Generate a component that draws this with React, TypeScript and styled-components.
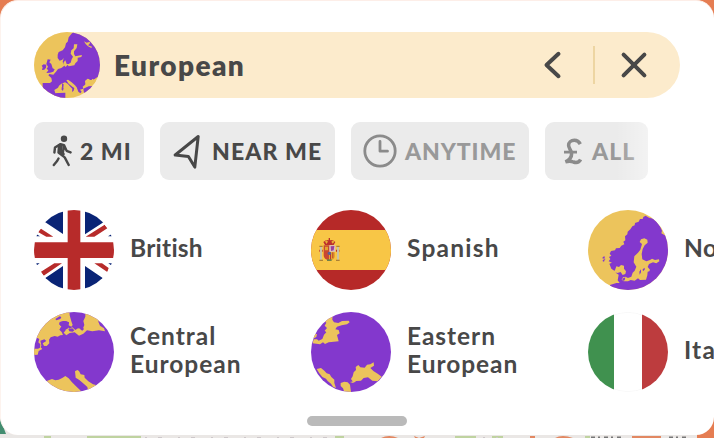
import React from "react";
import styled, { createGlobalStyle } from "styled-components";

const GlobalStyle = createGlobalStyle`
  * { box-sizing: border-box; }
  html, body { margin: 0; }
  body {
    width: 714px;
    height: 438px;
    overflow: hidden;
    font-family: Lato, "Liberation Sans", sans-serif;
    color: #484848;
  }
`;

const Page = styled.main`
  position: relative;
  width: 714px;
  height: 438px;
  overflow: hidden;
  background: #e57d52;
`;

const MapBackdrop = styled.svg`
  position: absolute;
  left: 0;
  bottom: 0;
`;

const Panel = styled.section`
  position: relative;
  display: flex;
  flex-direction: column;
  width: 714px;
  height: 435px;
  border-top: 1px solid #fdeee8;
  border-left: 1px solid #fdf3ee;
  border-radius: 18px;
  background: #fff;
  padding: 31px 0 9px 33px;
  overflow: hidden;
`;

const SearchBar = styled.header`
  display: flex;
  align-items: center;
  flex: none;
  width: 646px;
  height: 66px;
  border-radius: 33px;
  background: #fcebcc;
`;

const Title = styled.h1`
  margin: 0 auto 0 14px;
  font-size: 28px;
  line-height: 34px;
  font-weight: 800;
  letter-spacing: 1.4px;
`;

const IconButton = styled.button`
  display: grid;
  place-items: center;
  width: 86px;
  height: 66px;
  padding: 0 0 0 3px;
  border: 0;
  background: none;
  color: inherit;
`;

const CloseButton = styled(IconButton)`
  width: 77px;
  padding: 0;
  margin-right: 8px;
`;

const Divider = styled.span`
  width: 2px;
  height: 38px;
  background: #edd5a2;
`;

const Chips = styled.div`
  display: flex;
  flex: none;
  gap: 16px;
  position: relative;
  width: 614px;
  height: 58px;
  margin-top: 24px;

  &::after {
    content: "";
    position: absolute;
    right: 0;
    width: 32px;
    height: 58px;
    background: linear-gradient(90deg, #fff0, #fff6);
  }
`;

const Chip = styled.button<{ $width: number; $pad: number; $gap: number; $muted?: boolean; $spacing: number }>`
  display: flex;
  align-items: center;
  flex: none;
  gap: ${(p) => p.$gap}px;
  width: ${(p) => p.$width}px;
  height: 58px;
  padding: 0 0 0 ${(p) => p.$pad}px;
  border: 0;
  border-radius: 9px;
  background: #ebebeb;
  color: ${(p) => (p.$muted ? "#999" : "#484848")};
  font: 900 23px Lato, "Liberation Sans", sans-serif;
  letter-spacing: ${(p) => p.$spacing}px;
  white-space: nowrap;

  svg { flex: none; color: ${(p) => (p.$muted ? "#8b8b8b" : "#484848")}; }
`;

const CuisineGrid = styled.div`
  display: grid;
  flex: none;
  grid-template-columns: repeat(3, 277px);
  grid-auto-rows: 80px;
  row-gap: 22px;
  margin-top: 30px;
`;

const Cuisine = styled.div`
  display: flex;
  align-items: center;
  gap: 16px;
`;

const CuisineName = styled.span<{ $spacing: number }>`
  width: 140px;
  margin-top: -5px;
  font-size: 24.5px;
  line-height: 28px;
  font-weight: 700;
  letter-spacing: ${(p) => p.$spacing}px;
`;

const Handle = styled.div`
  align-self: center;
  width: 100px;
  height: 10px;
  margin-top: auto;
  margin-right: 35px;
  border-radius: 5px;
  background: #bababa;
`;

const Badge = styled.svg`
  display: block;
  flex: none;
  border-radius: 50%;
`;

const gold = "#ecc45c";
const violet = "#8338cd";

const EuropeGlobe = () => (
  <Badge width="66" height="66" viewBox="102 96 198 198">
    <rect x="102" y="96" width="198" height="198" fill={gold} />
    <path fill={violet} d="M220 96L214 102 206 112 203 125 198 130 195 142 188 151 176 156 173 164 173 174 179 182 187 179 191 174 188 186 193 197 184 204 174 207 168 215 160 224 148 222 145 226 154 234 156 244 150 249 128 249 128 264 142 278 158 286 166 280 163 270 174 263 177 257 184 251 195 247 203 251 211 260 217 266 216 276 221 272 223 264 218 261 206 251 199 241 204 239 214 246 225 256 230 262 235 275 241 280 245 275 240 269 250 266 248 260 258 252 255 244 263 236 272 240 276 236 281 239 289 233 300 228V96z" />
    <path fill={violet} d="M143 178L152 179 148 187 154 192 158 205 164 208 160 215 150 218 139 219 145 211 140 206 144 200 139 192zM131 193L139 194 138 203 133 209 126 210 128 202 125 197zM158 280L196 278V296H166zM186 250L191 253 190 264 186 262zM185 262L191 264 189 272 185 270zM250 266L266 259 280 258 290 249 290 262 265 280 252 278z" />
    <path fill={gold} d="M222 133L232 133 230 144 222 154 222 162 226 169 246 165 244 171 233 173 233 183 226 190 223 196 206 199 203 194 197 201 190 194 191 187 196 181 200 192 206 192 212 188 215 178 219 170 212 161 214 151 221 145zM252 124L260 128 270 125 269 131 264 136 276 140 274 144 264 139 257 132zM256 242L264 236 271 240 275 236 281 239 289 237 287 249 272 250 256 255zM214 276L201 271 199 274z" />
    <path fill={violet} d="M268 235L278 234 275 240 269 239zM201 187L207 185 207 190z" />
  </Badge>
);

const CentralGlobe = () => (
  <Badge width="80" height="80" viewBox="30 36 240 240">
    <rect x="30" y="36" width="240" height="240" fill={violet} />
    <path fill={gold} d="M30 30H136L137 46 142 64 146 75 142 80 134 76 135 67 128 64 118 63 107 66 105 73 112 79 106 89 113 96 117 105 109 106 101 110 92 108 80 112 75 119 76 130 68 138 52 137 50 142 55 147 44 153 41 164 28 165V146H42L48 143 49 133 43 127 46 117 36 112V30zM184 30H236V68L222 63 228 77 240 85 243 94 225 91 205 94 189 91 178 101 165 107 152 97 137 99 127 106 119 98 125 91 121 84 130 79 136 86 145 82 154 90 162 85 176 88 181 75 178 63 184 50zM68 243L84 237 94 241 104 239 116 233 124 228 134 235 144 247 156 259 168 270 175 280H68zM153 214L160 210 165 213 170 223 181 225 182 233 193 244 207 253 216 255 210 267 192 271 190 261 180 252 166 240 155 233z" />
    <path fill={violet} d="M94 57L107 49 112 51 109 57 97 61zM110 66L123 63 135 68 131 75 134 84 122 91 118 85 120 76 109 78zM133 87L145 85 151 91 146 95 136 94zM168 84L175 81 180 87 175 92 170 89zM49 122L61 118 67 123 56 130 60 137 53 140z" />
  </Badge>
);

const EasternGlobe = () => (
  <Badge width="80" height="80" viewBox="34 36 240 240">
    <rect x="34" y="36" width="240" height="240" fill={violet} />
    <path fill={gold} d="M74 54L99 44 98 59 103 67 116 69 127 63 147 62 150 67 142 73 126 76 112 80 107 88 117 90 120 100 112 105 117 124 87 127 76 132 70 127 61 133 39 130 42 118 52 118 57 122 68 117 73 104 80 97 75 92 82 84 75 77 80 68 72 61zM39 103L52 102 50 111 38 117zM51 207L64 204 74 212 81 220 90 223 95 231 104 239 104 249 109 264 100 260 94 251 84 243 79 236 68 231 59 220zM123 249L134 245 144 247 151 254 154 276 134 276 130 265 123 258zM154 237L159 229 162 217 169 210 168 201 176 195 182 202 195 203 202 194 212 193 222 187 223 197 212 204 221 213 234 221 246 230 234 244 218 242 205 232 192 234 184 242 170 243 162 248zM151 246L163 244 160 249z" />
  </Badge>
);

const NordicGlobe = () => (
  <Badge width="80" height="80" viewBox="24 30 240 240">
    <rect x="24" y="30" width="240" height="240" fill={gold} />
    <path fill={violet} d="M190 51L197 47 207 53 223 57 238 75 246 92 244 100 258 108 252 97 270 104V275H90V255L109 249 119 249 113 241 116 224 107 218 111 209 103 212 94 206 88 191 96 188 86 184 91 177 87 171 94 167 89 161 93 153 105 151 108 145 119 144 124 137 133 133 130 125 136 121 135 109 142 103 143 95 151 88 157 79 164 76 165 69 176 65 180 57 188 57z" />
    <path fill={violet} d="M68 171L74 169 74 175 68 176zM68 180L74 178 73 184 69 185zM72 176L76 176 75 180z" />
    <path fill={gold} d="M183 118L193 115 202 119 203 128 194 136 188 147 185 162 187 178 199 184 210 180 216 176 225 180 237 178 238 184 229 190 219 187 207 192 203 201 210 209 208 214 203 215 202 226 198 239 180 240 174 235 164 242 152 240 144 244 131 244 125 239 129 232 136 230 144 234 154 230 158 218 164 212 169 200 161 187 163 169 174 158 181 149 186 132 179 126zM103 216L109 199 117 201 123 195 132 197 132 206 138 214 136 222 128 225 122 216 112 219z" />
    <path fill={violet} d="M178 215L183 208 183 217 179 224zM188 208L194 203 194 209 189 214zM127 236L136 232 134 241 128 243z" />
  </Badge>
);

const BritishFlag = () => (
  <Badge width="80" height="80" viewBox="30 30 240 240">
    <rect x="30" y="30" width="240" height="240" fill="#fff" />
    <path fill="#0a2476" d="M30 30h87v72L64 67H30zM183 30h87v24l-34 14-53 35zM30 270h87v-72l-53 36H30zM183 270h87v-36h-34l-53-36zM30 98l18 11H35zM270 98l-18 11h18zM30 190h17l-17 12zM253 190h17v12z" />
    <path fill="#b72b2a" d="M131 30h38v97h101v47H169v96h-38v-96H30v-47h101zM51 86l37 24H67L42 96zM242 74l8 11-39 25h-26zM91 190h23l-55 37-8-12zM211 190h23l20 14-4 12z" />
  </Badge>
);

const SpanishFlag = () => (
  <Badge width="80" height="80" viewBox="34 30 240 240">
    <rect x="34" y="30" width="240" height="240" fill="#b62928" />
    <rect x="34" y="90" width="240" height="120" fill="#f8c646" />
    <path fill="#bc302c" d="M71 126l9-6 7 1v-7h4v7l8-1 8 6-5 9H76zM59 149h10v6H59zM109 149h10v6h-10z" />
    <path fill="#e8ad36" d="M76 124l5-3 4 4-5 7zM95 125l5-4 4 4-5 6z" />
    <path fill="#c8c3a8" d="M61 140h6v39h-6zM112 140h6v39h-6z" />
    <path fill="#ad8034" d="M59 137h10v4H59zM110 137h10v4h-10zM59 179h11v4H59zM109 179h11v4h-11z" />
    <path fill="#c84732" d="M72 136h18v19H72zM72 155h17v26c-10-1-17-7-17-15z" />
    <path fill="#d7c0c4" d="M89 136h18v19H89z" />
    <path fill="#9a409c" d="M93 139l11-1-2 13-8 2z" />
    <path fill="#e4a52f" d="M76 140h9v11h-9zM89 157h17v10c0 8-7 14-17 14z" />
    <path fill="#b83a30" d="M91 157h3v22h-3zM98 157h3v18h-3z" />
    <circle cx="89" cy="160" r="5" fill="#56609a" />
    <path fill="#728048" d="M82 178h14v5H82z" />
  </Badge>
);

const ItalianFlag = () => (
  <Badge width="80" height="80" viewBox="0 0 80 80">
    <circle cx="40" cy="40" r="39.7" fill="#fff" stroke="#eee" strokeWidth=".5" />
    <path fill="#40914f" d="M0 0h26v80H0z" />
    <path fill="#bd3c3e" d="M54 0h26v80H54z" />
  </Badge>
);

const Walker = () => (
  <svg width="20" height="34" viewBox="0 0 20 34">
    <circle cx="12" cy="4.8" r="3.2" fill="currentColor" />
    <g fill="none" stroke="currentColor" strokeWidth="2.4" strokeLinecap="round" strokeLinejoin="round">
      <path d="M2.4 18.5L3 13.5l5.5-3.4 3.5 1 2.6 5.7 4 1.6M7 12l-.5 6.6 6.2 4.8 4 7.6M12 12l-1.2 7M6.5 24.5l-1.6 2.8L1.8 31" />
      <path strokeWidth="3.6" d="M9 12.2l-.8 5.6 2.8 2.4" />
    </g>
  </svg>
);

const Arrow = () => (
  <svg width="28" height="36" viewBox="0 0 28 36" fill="none" stroke="currentColor" strokeWidth="3" strokeLinejoin="round">
    <path d="M25.2 3.5L2.2 22l13.2 1.4 6.4 10.7z" />
  </svg>
);

const Clock = () => (
  <svg width="34" height="34" viewBox="0 0 34 34" fill="none" stroke="currentColor" strokeWidth="2.8" strokeLinecap="round" strokeLinejoin="round">
    <circle cx="17" cy="17" r="15.2" />
    <path d="M17 7.5v9.7h7.5" />
  </svg>
);

const Pound = () => (
  <svg width="20" height="27" viewBox="0 0 20 27" fill="none" stroke="currentColor" strokeWidth="3.5">
    <path d="M17.3 6.1C16 3.5 13.9 2.3 11.4 2.3 7.9 2.3 5.6 4.4 5.6 7.3c0 2.5 2 4.4 2.7 6.8 1 4.3-1.1 7.7-5.9 9.8 3-.8 5.5-.9 8 .1 3 1.1 5.5.8 7.2-2.5" />
    <path strokeWidth="2.8" d="M1 14.2h13" />
  </svg>
);

const cuisines = [
  { name: "British", spacing: 0.25, Picture: BritishFlag },
  { name: "Spanish", spacing: 1.25, Picture: SpanishFlag },
  { name: "Nordic", spacing: 0.5, Picture: NordicGlobe },
  { name: "Central European", spacing: 1, Picture: CentralGlobe },
  { name: "Eastern European", spacing: 0.95, Picture: EasternGlobe },
  { name: "Italian", spacing: 1.2, Picture: ItalianFlag },
];

export default function App() {
  return (
    <Page>
      <GlobalStyle />
      <MapBackdrop width="714" height="40" viewBox="0 398 714 40">
        <path fill="#eae7e5" d="M0 398h697v40H0z" />
        <path fill="#438d70" d="M0 418l6 16H0z" />
        <path fill="#bfd3a0" d="M87 436h54v2H87zM44 436h7v2h-7zM335 436h9v2h-9zM455 436h21v2h-21zM492 436h11v2h-11zM585 436h5v2h-5z" />
        <path fill="#e28862" d="M381 438q8-4 17 0zM414 436l5 2 6-2-1 2h-9zM555 438q7-4 18 0zM632 436h29v2h-29zM530 436h5v2h-5z" />
        <path stroke="#777" strokeWidth="1.5" strokeDasharray="4 3 2 4" d="M591 437.2h31M669 437.2h18" />
        <path stroke="#cec8ca" strokeDasharray="2 11 4 16" d="M145 437.5h185M483 437.5h15" />
      </MapBackdrop>
      <Panel>
        <SearchBar>
          <EuropeGlobe />
          <Title>European</Title>
          <IconButton aria-label="Back">
            <svg width="20" height="30" viewBox="0 0 20 30" fill="none" stroke="currentColor" strokeWidth="4" strokeLinecap="round" strokeLinejoin="round">
              <path d="M16.5 3.8L4.5 15l12 11.2" />
            </svg>
          </IconButton>
          <Divider />
          <CloseButton aria-label="Close">
            <svg width="30" height="30" viewBox="0 0 30 30" stroke="currentColor" strokeWidth="4" strokeLinecap="round">
              <path d="M4.6 4.6l20.8 20.8M25.4 4.6L4.6 25.4" />
            </svg>
          </CloseButton>
        </SearchBar>
        <Chips>
          <Chip $width={110} $pad={18} $gap={8} $spacing={1}><Walker />2 MI</Chip>
          <Chip $width={175} $pad={13} $gap={11} $spacing={1.1}><Arrow />NEAR ME</Chip>
          <Chip $width={178} $pad={12} $gap={8} $spacing={0.9} $muted><Clock />ANYTIME</Chip>
          <Chip $width={103} $pad={18} $gap={9} $spacing={1} $muted><Pound />ALL</Chip>
        </Chips>
        <CuisineGrid>
          {cuisines.map(({ name, spacing, Picture }) => (
            <Cuisine key={name}>
              <Picture />
              <CuisineName $spacing={spacing}>{name}</CuisineName>
            </Cuisine>
          ))}
        </CuisineGrid>
        <Handle />
      </Panel>
    </Page>
  );
}
